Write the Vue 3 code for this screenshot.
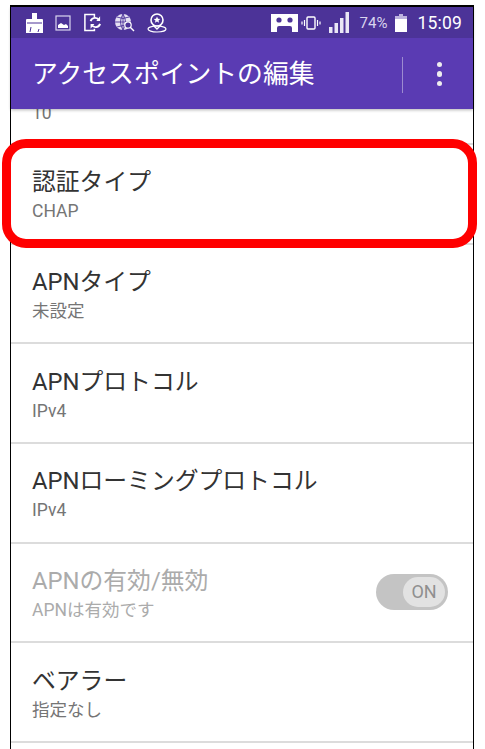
<script setup>
const rows = [
  { title: '認証タイプ', sub: 'CHAP' },
  { title: 'APNタイプ', sub: '未設定' },
  { title: 'APNプロトコル', sub: 'IPv4' },
  { title: 'APNローミングプロトコル', sub: 'IPv4' },
  { title: 'APNの有効/無効', sub: 'APNは有効です', disabled: true, toggle: true },
  { title: 'ベアラー', sub: '指定なし' },
]
</script>

<template>
  <div class="page">
    <div class="device">
      <header class="head">
        <div class="status">
          <div class="status-left">
            <svg class="ic" width="17" height="20" viewBox="0 0 17 20"><path d="M6 0h5v6h5a1 1 0 0 1 1 1v13H0V7a1 1 0 0 1 1-1h5z" fill="#fff"/><path d="M1 10h15" stroke="#4c3398" stroke-width="1"/><path d="M4 19l1-5M12 19l1-3" stroke="#4c3398" stroke-width="1"/></svg>
            <svg class="ic" width="16" height="16" viewBox="0 0 16 16"><rect x="1" y="1" width="14" height="14" fill="none" stroke="#d9d4ee" stroke-width="1.2"/><path d="M3 13v-3l3-2 3 2 2-1 2 2v2z" fill="#fff"/></svg>
            <svg class="ic" width="19" height="19" viewBox="0 0 20 19"><path d="M12 4V1H2v17h10v-2" fill="none" stroke="#fff" stroke-width="1.6"/><path d="M8 8a5 5 0 0 1 9-1M18 11a5 5 0 0 1-9 1" fill="none" stroke="#fff" stroke-width="2"/><path d="M18 3v5h-4zM8 16v-5h4z" fill="#fff"/></svg>
            <svg class="ic" width="21" height="19" viewBox="0 0 21 19"><circle cx="9" cy="9" r="8" fill="#e6e1f3"/><path d="M1 9h16M9 1v16M3 4q6 3 12 0M3 14q6-3 12 0M9 1q-5 8 0 16M9 1q5 8 0 16" fill="none" stroke="#4c3398" stroke-width=".9"/><circle cx="14" cy="12" r="3.2" fill="#4c3398" stroke="#fff" stroke-width="1.2"/><path d="M16 14l4 4" stroke="#fff" stroke-width="1.4"/></svg>
            <svg class="ic" width="20" height="20" viewBox="0 0 20 20"><circle cx="10" cy="7" r="6" fill="none" stroke="#fff" stroke-width="1.6"/><path d="M10 3.6l1 2.2 2.3.2-1.8 1.5.6 2.3-2.1-1.2-2.1 1.2.6-2.3L6.700 6 9 5.800z" fill="#fff"/><path d="M6 12l4 4 4-4" fill="none" stroke="#fff" stroke-width="1.4"/><ellipse cx="10" cy="16" rx="9" ry="3" fill="none" stroke="#fff" stroke-width="1.2"/></svg>
          </div>
          <div class="status-right">
            <svg class="ic" width="27" height="18" viewBox="0 0 27 18"><path d="M0 0h27v18H21v-4a2 2 0 0 0-2-2H8a2 2 0 0 0-2 2v4H0z" fill="#fff"/><circle cx="8" cy="6" r="2.600" fill="#4c3398"/><circle cx="19" cy="6" r="2.600" fill="#4c3398"/></svg>
            <svg class="ic vib" width="20" height="14" viewBox="0 0 20 14"><rect x="6" y="1" width="8" height="12" rx="1" fill="none" stroke="#fff" stroke-width="1.400"/><path d="M3.500 4v6M16.500 4v6M1 5.500v3M19 5.500v3" stroke="#fff" stroke-width="1.200"/></svg>
            <svg class="ic signal" width="20" height="21" viewBox="0 0 20 21"><path d="M0 15h3.500v6H0zM5.500 11H9v10H5.500zM11 6h3.500v15H11zM16.500 0H20v21h-3.500z" fill="#e9e6f5"/></svg>
            <span class="pct">74%</span>
            <svg class="ic batt" width="12" height="18" viewBox="0 0 12 18"><path d="M4 0h4v2H4z" fill="#bdb3de"/><path d="M0 2h12v3H0z" fill="#bdb3de"/><path d="M0 5h12v13H0z" fill="#fff"/></svg>
            <span class="clock">15:09</span>
          </div>
        </div>
        <div class="bar">
          <h1 class="title">アクセスポイントの編集</h1>
          <span class="sep"></span>
          <div class="more"><i></i><i></i><i></i></div>
        </div>
      </header>
      <div class="list">
        <div class="row partial"><span class="sub">10</span></div>
        <div v-for="r in rows" :key="r.title" class="row" :class="{ disabled: r.disabled }">
          <div class="texts">
            <div class="name">{{ r.title }}</div>
            <div class="sub">{{ r.sub }}</div>
          </div>
          <div v-if="r.toggle" class="toggle"><span class="knob">ON</span></div>
        </div>
      </div>
    </div>
    <div class="highlight"></div>
  </div>
</template>

<style scoped>
.page {
  position: relative;
  width: 485px;
  height: 749px;
  overflow: hidden;
  background: #fff;
  font-family: Roboto, "Noto Sans CJK JP", sans-serif;
}
.device {
  box-sizing: border-box;
  width: 464px;
  height: 760px;
  margin-left: 10px;
  border: 1px solid #000;
  border-top-width: 2px;
  position: relative;
  top: 5px;
  background: #fff;
}
.head {
  position: relative;
  z-index: 2;
  box-shadow: 0 1px 3px rgba(0,0,0,.3);
}
.status {
  height: 31px;
  background: #4c3398;
  display: flex;
  justify-content: space-between;
  align-items: center;
  padding: 0 11px 0 15px;
}
.status-left, .status-right { display: flex; align-items: center; }
.status-left { gap: 12px; }
.ic { display: block; flex: none; }
.vib { margin-left: 3px; }
.signal { margin-left: 8px; }
.pct { color: #d9d4ee; font-size: 15px; margin-left: 11px; }
.batt { margin-left: 8px; }
.clock { color: #fff; font-size: 17.500px; margin-left: 10px; letter-spacing: .2px; }
.bar {
  height: 71px;
  background: #5a3bb3;
  display: flex;
  align-items: center;
  padding: 0 31px 0 21px;
}
.title {
  flex: 1;
  margin: 0;
  color: #fff;
  font-size: 25.800px;
  font-weight: 400;
  line-height: 1;
  margin-top: 2px;
}
.sep { width: 1px; height: 36px; background: #9c8bd0; margin-right: 34px; margin-top: 2px; }
.more { display: flex; flex-direction: column; gap: 4px; margin-top: 1px; }
.more i { width: 5.500px; height: 5.500px; border-radius: 50%; background: #eee; display: block; }
.list { margin-top: -66px; }
.row {
  box-sizing: border-box;
  height: 99.700px;
  border-bottom: 2px solid #dcdcdc;
  padding: 0 25px 0 21px;
  display: flex;
  align-items: center;
  justify-content: space-between;
}
.partial { height: 102px; align-items: flex-end; padding-bottom: 18px; }
.texts { margin-top: 3px; }
.name {
  font-size: 23.800px;
  line-height: 30px;
  color: #333;
}
.sub {
  font-size: 17.500px;
  line-height: 24px;
  color: #757575;
  margin-top: 2px;
}
.disabled .name, .disabled .sub { color: #ababab; }
.toggle {
  box-sizing: border-box;
  width: 72px;
  height: 36px;
  border-radius: 18px;
  background: #c4c4c4;
  padding: 3px;
  display: flex;
  justify-content: flex-end;
  margin-top: -2px;
}
.knob {
  width: 42px;
  height: 30px;
  border-radius: 15px;
  background: #e2e2e2;
  color: #8f8f8f;
  font-size: 18px;
  display: flex;
  align-items: center;
  justify-content: center;
}
.highlight {
  position: absolute;
  left: 2px;
  top: 139px;
  width: 475px;
  height: 109px;
  box-sizing: border-box;
  border: 9px solid #f00;
  border-radius: 24px;
  z-index: 3;
}
</style>
